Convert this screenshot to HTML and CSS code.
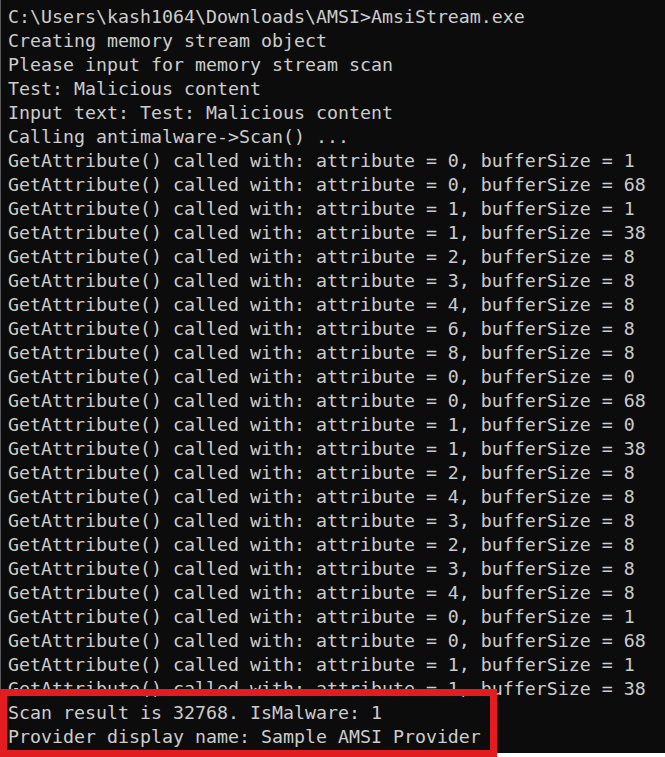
FILE: index.html
```html
<!DOCTYPE html>
<html>
<head>
<meta charset="utf-8">
<link rel="stylesheet" href="styles.css">
</head>
<body>
<div class="console">
<pre class="out">C:\Users\kash1064\Downloads\AMSI>AmsiStream.exe
Creating memory stream object
Please input for memory stream scan
Test: Malicious content
Input text: Test: Malicious content
Calling antimalware->Scan() ...
GetAttribute() called with: attribute = 0, bufferSize = 1
GetAttribute() called with: attribute = 0, bufferSize = 68
GetAttribute() called with: attribute = 1, bufferSize = 1
GetAttribute() called with: attribute = 1, bufferSize = 38
GetAttribute() called with: attribute = 2, bufferSize = 8
GetAttribute() called with: attribute = 3, bufferSize = 8
GetAttribute() called with: attribute = 4, bufferSize = 8
GetAttribute() called with: attribute = 6, bufferSize = 8
GetAttribute() called with: attribute = 8, bufferSize = 8
GetAttribute() called with: attribute = 0, bufferSize = 0
GetAttribute() called with: attribute = 0, bufferSize = 68
GetAttribute() called with: attribute = 1, bufferSize = 0
GetAttribute() called with: attribute = 1, bufferSize = 38
GetAttribute() called with: attribute = 2, bufferSize = 8
GetAttribute() called with: attribute = 4, bufferSize = 8
GetAttribute() called with: attribute = 3, bufferSize = 8
GetAttribute() called with: attribute = 2, bufferSize = 8
GetAttribute() called with: attribute = 3, bufferSize = 8
GetAttribute() called with: attribute = 4, bufferSize = 8
GetAttribute() called with: attribute = 0, bufferSize = 1
GetAttribute() called with: attribute = 0, bufferSize = 68
GetAttribute() called with: attribute = 1, bufferSize = 1
GetAttribute() called with: attribute = 1, bufferSize = 38
Scan result is 32768. IsMalware: 1
Provider display name: Sample AMSI Provider</pre>
</div>
<div class="highlight"></div>
</body>
</html>
```
FILE: styles.css
```css
html, body {
  margin: 0;
  padding: 0;
  background: #ffffff;
}
body {
  position: relative;
  width: 665px;
  height: 757px;
  overflow: hidden;
}
.console {
  box-sizing: border-box;
  height: 753px;
  background: #0c0c0c;
  border-left: 1px solid #5a5a5a;
  padding: 5px 0 0 7px;
}
.out {
  margin: 0;
  font-family: "DejaVu Sans Mono", "Liberation Mono", monospace;
  font-size: 18.27px;
  line-height: 24px;
  color: #cccccc;
  white-space: pre;
}
.highlight {
  position: absolute;
  left: 0;
  top: 689px;
  width: 497px;
  height: 68px;
  box-sizing: border-box;
  border: 7px solid #e31c1f;
}
```
